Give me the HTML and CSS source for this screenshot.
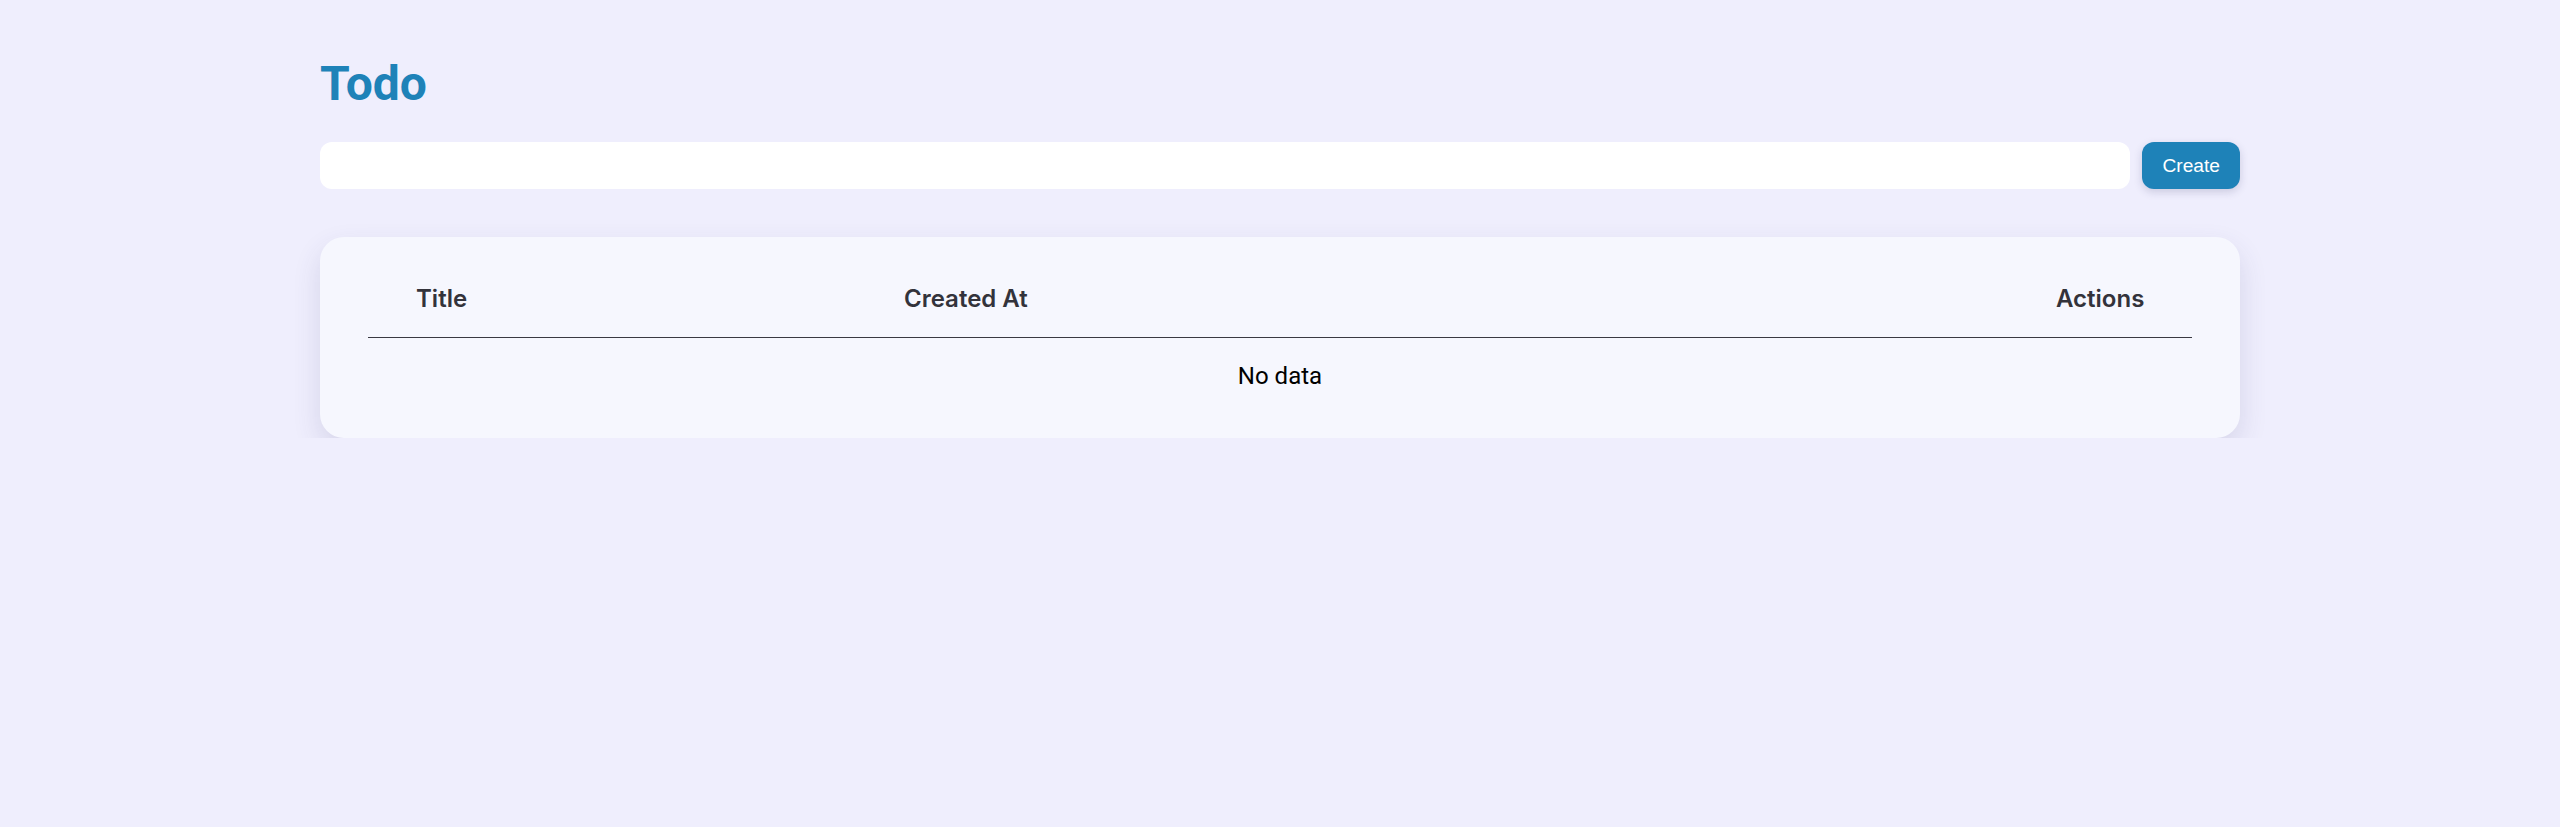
FILE: index.html
```html
<!DOCTYPE html>
<html lang="en">
<head>
<meta charset="utf-8">
<title>Todo</title>
<link rel="stylesheet" href="styles.css">
</head>
<body>
<main class="page">
  <h1 class="title">Todo</h1>
  <form class="create-row">
    <input class="create-input" type="text" aria-label="New todo">
    <button class="create-btn" type="button">Create</button>
  </form>
  <section class="card">
    <table class="todo-table">
      <colgroup>
        <col class="col-title">
        <col class="col-created">
        <col class="col-actions">
      </colgroup>
      <thead>
        <tr>
          <th class="th-left">Title</th>
          <th class="th-left">Created At</th>
          <th class="th-right">Actions</th>
        </tr>
      </thead>
      <tbody>
        <tr>
          <td class="empty" colspan="3">No data</td>
        </tr>
      </tbody>
    </table>
  </section>
</main>
</body>
</html>
```

FILE: styles.css
```css
* { box-sizing: border-box; }

html, body {
  margin: 0;
  padding: 0;
  background: #efeefd;
  font-family: Inter, "Noto Sans", sans-serif;
}

.page {
  width: 1920px;
  margin: 0 auto;
  padding-top: 55px;
}

.title {
  margin: 0 0 29px;
  font-family: Roboto, "Liberation Sans", sans-serif;
  font-size: 48px;
  line-height: 58px;
  font-weight: 700;
  color: #1e82b8;
}

.create-row {
  display: flex;
  gap: 12px;
  margin: 0 0 48px;
}

.create-input {
  flex: 1;
  height: 47px;
  border: none;
  border-radius: 12px;
  background: #ffffff;
  padding: 0 16px;
  font-size: 18px;
  outline: none;
}

.create-btn {
  height: 47px;
  padding: 0 20px;
  border: none;
  border-radius: 12px;
  background: #1e82b8;
  color: #ffffff;
  font-family: "Liberation Sans", Arial, sans-serif;
  font-size: 19.2px;
  box-shadow: 0 3px 8px rgba(40, 40, 90, 0.18);
  cursor: pointer;
}

.card {
  background: #f6f7fe;
  border-radius: 24px;
  padding: 24px 48px;
  box-shadow: 0 12px 28px rgba(60, 60, 110, 0.14);
}

.todo-table {
  width: 100%;
  border-collapse: collapse;
  table-layout: fixed;
}

.col-title { width: 488px; }
.col-actions { width: 184px; }

.todo-table th {
  padding: 24px 48px;
  font-size: 24px;
  line-height: 28px;
  font-weight: 600;
  color: #33333b;
  border-bottom: 1px solid #3a3a42;
}

.th-left { text-align: left; }
.th-right { text-align: right; }

.empty {
  padding: 24px 0;
  text-align: center;
  font-family: Roboto, Inter, sans-serif;
  font-size: 24px;
  line-height: 28px;
  color: #000000;
}
```
